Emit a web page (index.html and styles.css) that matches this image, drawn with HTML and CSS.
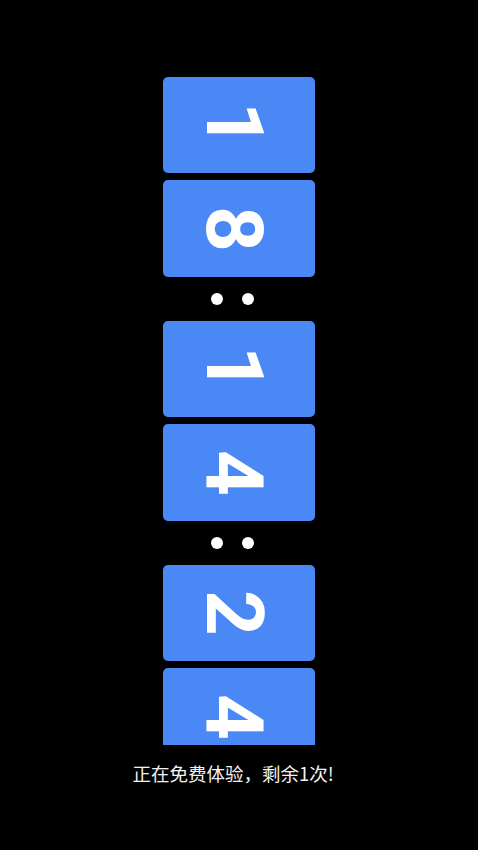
FILE: index.html
```html
<!DOCTYPE html>
<html lang="zh">
<head>
<meta charset="utf-8">
<link rel="stylesheet" href="styles.css">
</head>
<body>
<div class="page">
  <div class="clock">
    <div class="pair">
      <div class="card"><span class="digit">1</span></div>
      <div class="card"><span class="digit">8</span></div>
    </div>
    <div class="sep"><span class="dot"></span><span class="dot"></span></div>
    <div class="pair">
      <div class="card"><span class="digit">1</span></div>
      <div class="card"><span class="digit">4</span></div>
    </div>
    <div class="sep"><span class="dot"></span><span class="dot"></span></div>
    <div class="pair">
      <div class="card"><span class="digit">2</span></div>
      <div class="card"><span class="digit">4</span></div>
    </div>
  </div>
  <p class="notice">正在免费体验，剩余1次!</p>
</div>
</body>
</html>
```

FILE: styles.css
```css
html, body {
  margin: 0;
  padding: 0;
  background: #000;
}
.page {
  width: 478px;
  height: 850px;
  display: flex;
  flex-direction: column;
  align-items: center;
  font-family: Roboto, "Noto Sans", "Noto Sans CJK SC", sans-serif;
}
.clock {
  margin-top: 77px;
  height: 668px;
  overflow: hidden;
  display: flex;
  flex-direction: column;
  align-items: center;
}
.pair {
  display: flex;
  flex-direction: column;
  gap: 7px;
}
.card {
  width: 152px;
  height: 97px;
  border-radius: 5px;
  background: #4a88f6;
  display: flex;
  align-items: center;
  justify-content: center;
  flex-shrink: 0;
}
.pair .card:first-child {
  height: 96px;
}
.digit {
  display: block;
  color: #fff;
  font-size: 80px;
  font-weight: 700;
  line-height: 1;
  transform: translateX(-5px) rotate(90deg);
}
.sep {
  height: 44px;
  flex-shrink: 0;
  display: flex;
  align-items: center;
  justify-content: center;
  gap: 19px;
  padding-right: 13px;
}
.dot {
  width: 12px;
  height: 12px;
  border-radius: 50%;
  background: #fff;
}
.notice {
  margin: 16px 0 0;
  padding-right: 12px;
  color: #f2f2f2;
  font-family: "Noto Sans CJK SC", sans-serif;
  font-size: 18.5px;
  line-height: 24px;
}
```
